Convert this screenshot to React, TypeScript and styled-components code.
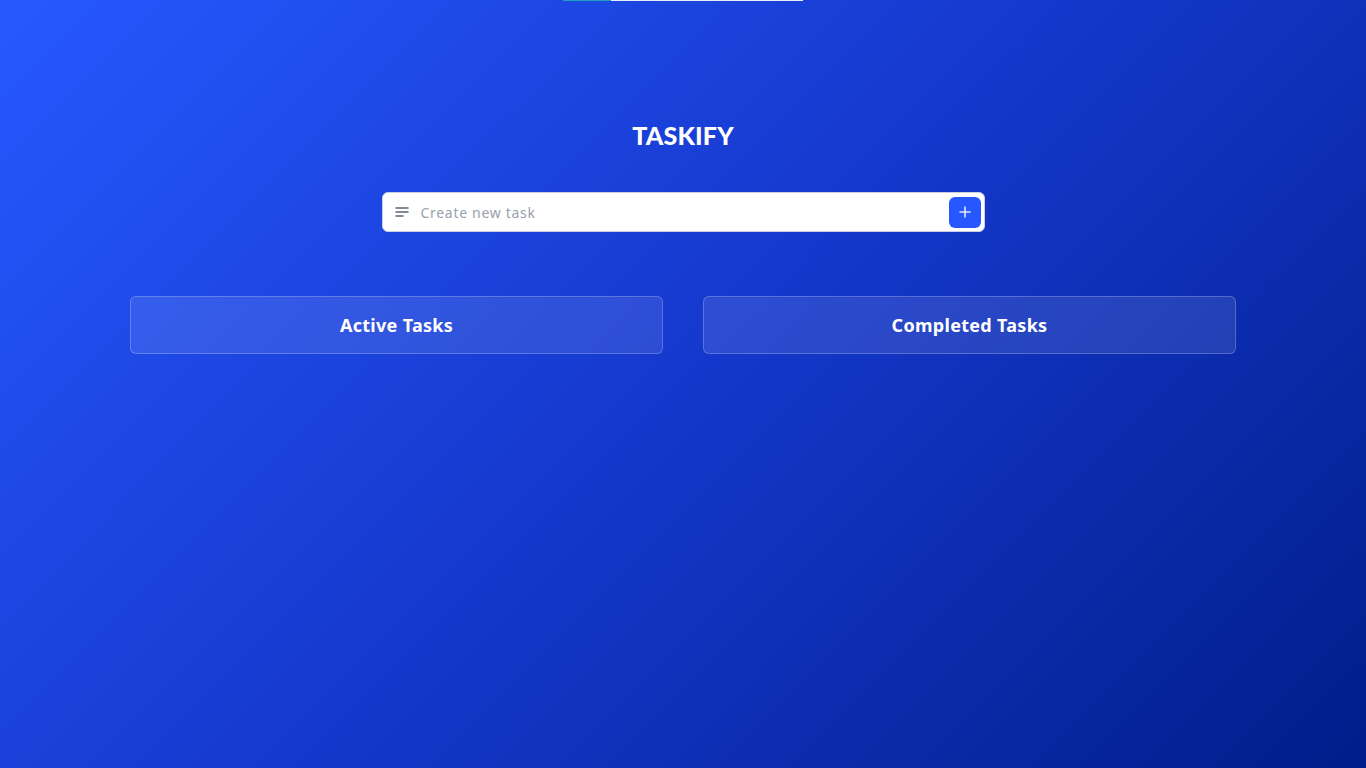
import styled, { createGlobalStyle } from "styled-components";

const GlobalStyle = createGlobalStyle`
  html, body {
    margin: 0;
    padding: 0;
  }
  body {
    min-height: 100vh;
    font-family: "Lato", "Noto Sans", sans-serif;
    background: linear-gradient(135deg, #2759ff 0%, #1538cc 50%, #001e8a 100%);
    background-attachment: fixed;
  }
`;

const Page = styled.div`
  position: relative;
  min-height: 100vh;
  display: flex;
  flex-direction: column;
  align-items: center;
`;

const TopBar = styled.div`
  position: absolute;
  top: 0;
  left: 563px;
  width: 240px;
  height: 1px;
  background: #e8ecf7;
`;

const TopBarFill = styled.div`
  width: 48px;
  height: 100%;
  background: #1f9fc0;
`;

const Title = styled.h1`
  margin: 120px 0 0;
  font-family: "Lato", sans-serif;
  font-size: 25px;
  font-weight: 900;
  letter-spacing: 0.2px;
  color: #ffffff;
  line-height: 30px;
`;

const InputBox = styled.form`
  margin-top: 42px;
  width: 603px;
  height: 40px;
  box-sizing: border-box;
  display: flex;
  align-items: center;
  background: #ffffff;
  border: 1px solid #c9cfe0;
  border-radius: 6px;
  padding: 0 3px 0 12px;
`;

const InputIcon = styled.span`
  display: flex;
  align-items: center;
  color: #5c6375;
  margin-right: 12px;
`;

const TaskInput = styled.input`
  flex: 1;
  border: none;
  outline: none;
  background: transparent;
  font-family: "Noto Sans", sans-serif;
  font-size: 14px;
  letter-spacing: 0.7px;
  color: #333;
  padding: 0;
  &::placeholder {
    color: #9aa0ad;
  }
`;

const AddButton = styled.button`
  width: 32px;
  height: 31px;
  border: none;
  border-radius: 6px;
  background: #2657ff;
  color: #fff;
  display: flex;
  align-items: center;
  justify-content: center;
  padding: 0;
  cursor: pointer;
`;

const Columns = styled.div`
  margin-top: 64px;
  width: 1106px;
  display: grid;
  grid-template-columns: 1fr 1fr;
  gap: 40px;
`;

const Column = styled.section`
  height: 58px;
  box-sizing: border-box;
  border-radius: 6px;
  border: 1px solid rgba(255, 255, 255, 0.22);
  background: rgba(255, 255, 255, 0.1);
  display: flex;
  align-items: center;
  justify-content: center;
`;

const ColumnTitle = styled.h2`
  margin: 0;
  font-family: "Noto Sans", sans-serif;
  font-size: 18px;
  font-weight: 700;
  letter-spacing: 0.3px;
  color: #ffffff;
`;

export default function App() {
  return (
    <>
      <GlobalStyle />
      <Page>
        <TopBar>
          <TopBarFill />
        </TopBar>
        <Title>TASKIFY</Title>
        <InputBox onSubmit={(e) => e.preventDefault()}>
          <InputIcon>
            <svg width="14" height="12" viewBox="0 0 14 12" fill="none">
              <path d="M1 2h12M1 6h12M1 10h7" stroke="currentColor" strokeWidth="1.5" strokeLinecap="round" />
            </svg>
          </InputIcon>
          <TaskInput placeholder="Create new task" />
          <AddButton type="submit" aria-label="Add task">
            <svg width="12" height="12" viewBox="0 0 12 12" fill="none">
              <path d="M6 1v10M1 6h10" stroke="#dfe6ff" strokeWidth="1.6" strokeLinecap="round" />
            </svg>
          </AddButton>
        </InputBox>
        <Columns>
          <Column>
            <ColumnTitle>Active Tasks</ColumnTitle>
          </Column>
          <Column>
            <ColumnTitle>Completed Tasks</ColumnTitle>
          </Column>
        </Columns>
      </Page>
    </>
  );
}
